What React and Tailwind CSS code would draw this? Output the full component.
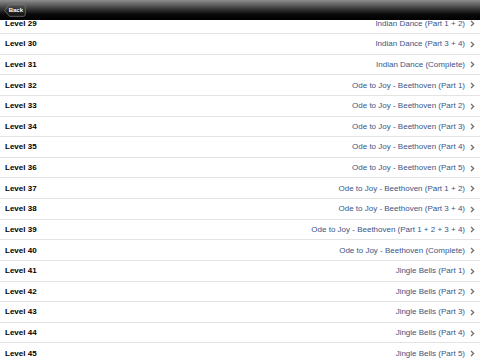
import React from "react";

const rows = [
  [29, "Indian Dance (Part 1 + 2)"],
  [30, "Indian Dance (Part 3 + 4)"],
  [31, "Indian Dance (Complete)"],
  [32, "Ode to Joy - Beethoven (Part 1)"],
  [33, "Ode to Joy - Beethoven (Part 2)"],
  [34, "Ode to Joy - Beethoven (Part 3)"],
  [35, "Ode to Joy - Beethoven (Part 4)"],
  [36, "Ode to Joy - Beethoven (Part 5)"],
  [37, "Ode to Joy - Beethoven (Part 1 + 2)"],
  [38, "Ode to Joy - Beethoven (Part 3 + 4)"],
  [39, "Ode to Joy - Beethoven (Part 1 + 2 + 3 + 4)"],
  [40, "Ode to Joy - Beethoven (Complete)"],
  [41, "Jingle Bells (Part 1)"],
  [42, "Jingle Bells (Part 2)"],
  [43, "Jingle Bells (Part 3)"],
  [44, "Jingle Bells (Part 4)"],
  [45, "Jingle Bells (Part 5)"],
];

function Chevron() {
  return (
    <svg width="5" height="7" viewBox="0 0 5 7" className="shrink-0">
      <path d="M1 1 L3.6 3.5 L1 6" fill="none" stroke="#6f6f6f" strokeWidth="1.3" />
    </svg>
  );
}

export default function App() {
  return (
    <div
      className="relative w-[480px] h-[360px] overflow-hidden bg-white"
      style={{ fontFamily: '"Liberation Sans", Arial, sans-serif' }}
    >
      <div className="flex flex-col mt-[13.4px]">
        {rows.map(([n, t]) => (
          <div
            key={n}
            className="flex items-center justify-between h-[20.625px] shrink-0 border-b border-[#e3e3e3] pl-[5px] pr-[5px] pt-[1px]"
          >
            <span className="text-[8px] font-bold text-black leading-none">Level {n}</span>
            <div className="flex items-center gap-[5px]">
              <span className="text-[8px] text-[#3a5587] leading-none">{t}</span>
              <Chevron />
            </div>
          </div>
        ))}
      </div>

      <div className="absolute top-0 left-0 w-full h-[20px] bg-[linear-gradient(to_bottom,#8e8e8e_0%,#4a4a4a_35%,#0a0a0a_70%,#000_100%)] flex items-center pl-[4px]">
        <div className="relative w-[22px] h-[13px] flex items-center justify-end pr-[3px]">
          <svg className="absolute inset-0" width="22" height="13" viewBox="0 0 22 13">
            <defs>
              <linearGradient id="bb" x1="0" y1="0" x2="0" y2="1">
                <stop offset="0" stopColor="#5a5a5a" />
                <stop offset="0.5" stopColor="#2a2a2a" />
                <stop offset="1" stopColor="#111" />
              </linearGradient>
            </defs>
            <path
              d="M0.5 6.5 L5.5 0.7 L19.5 0.7 Q21.3 0.7 21.3 2.5 L21.3 10.5 Q21.3 12.3 19.5 12.3 L5.5 12.3 Z"
              fill="url(#bb)"
              stroke="#777"
              strokeWidth="0.8"
            />
          </svg>
          <span className="relative text-[6px] font-bold text-white leading-none">Back</span>
        </div>
      </div>
    </div>
  );
}
